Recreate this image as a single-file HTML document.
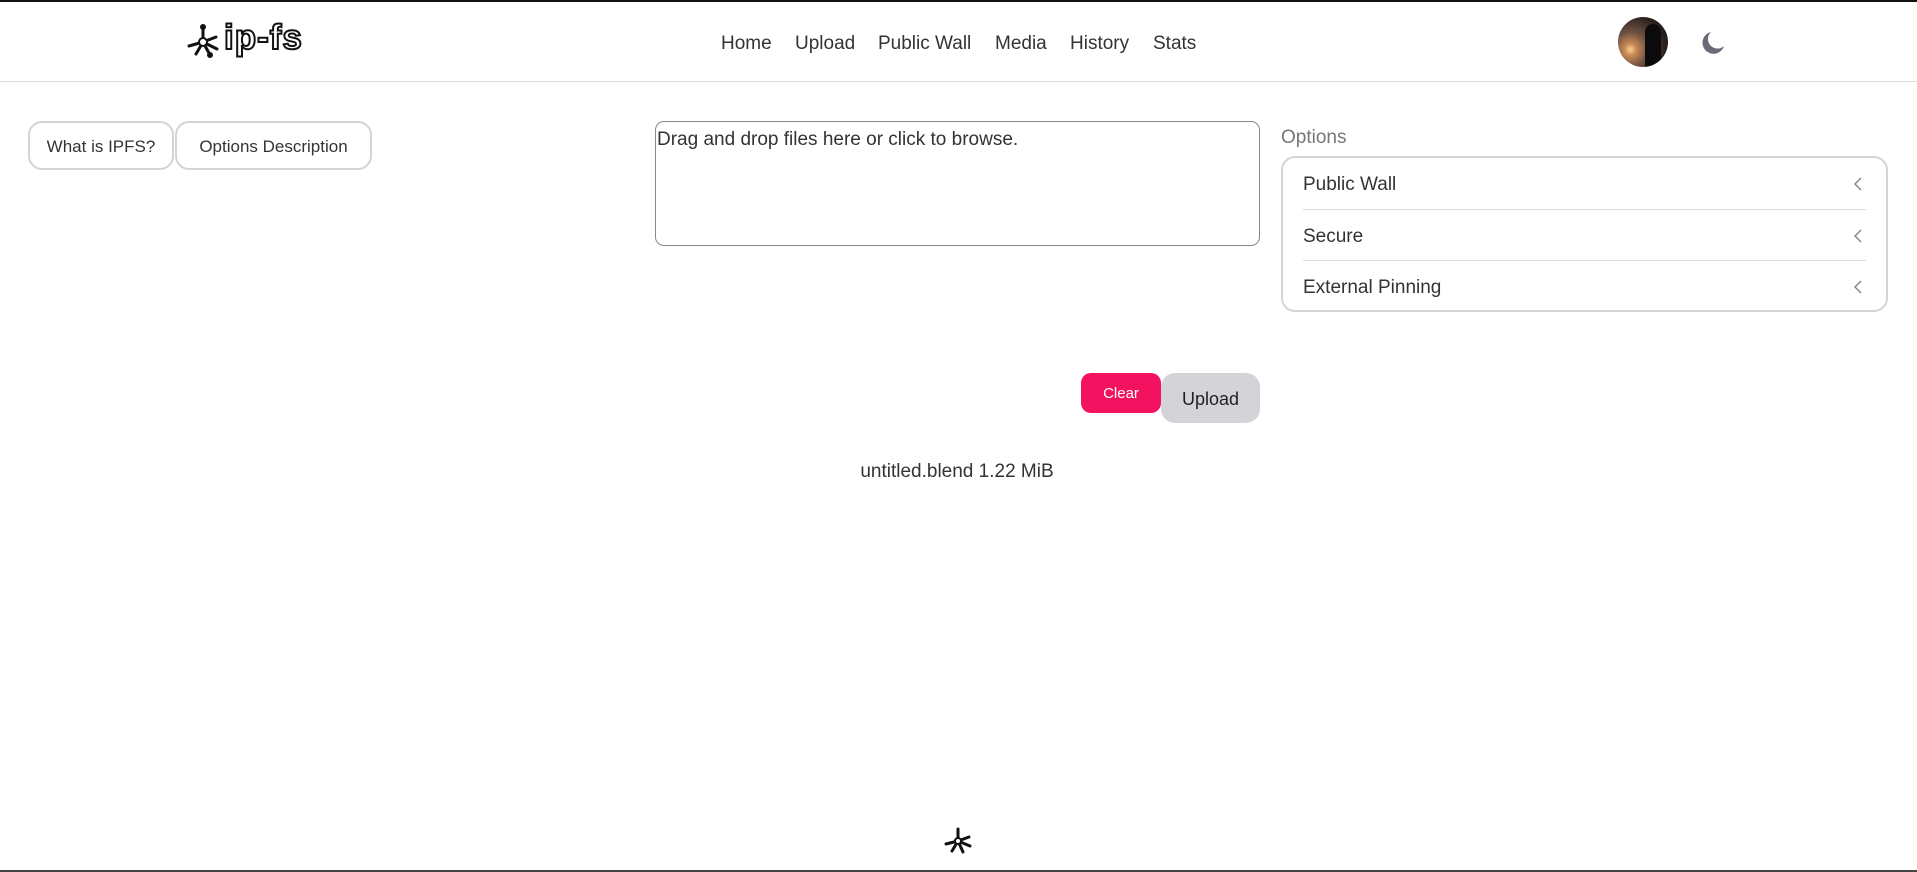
<!DOCTYPE html>
<html><head><meta charset="utf-8"><style>
*{box-sizing:border-box;margin:0;padding:0}
body{width:1917px;height:872px;background:#fff;font-family:"Liberation Sans",sans-serif;color:#333;position:relative;overflow:hidden}
.topbar{position:absolute;left:0;top:0;width:100%;height:2px;background:#111}
.hdr{position:absolute;left:0;top:2px;width:100%;height:80px;border-bottom:1px solid #ddd}
.nav{position:absolute;top:33px;font-size:19px;color:#333}
.btn{position:absolute;border:2px solid #d4d4d8;border-radius:14px;font-size:17px;display:flex;align-items:center;justify-content:center;color:#333;background:#fff;padding-top:2px}
.drop{position:absolute;left:655px;top:121px;width:605px;height:125px;border:1px solid #888;border-radius:9px;font-size:19px;padding:7px 0 0 1px;color:#333}
.opts{position:absolute;left:1281px;top:156px;width:607px;height:156px;border:2px solid #d4d4d8;border-radius:14px}
.row{position:absolute;left:20px;right:20px;height:51px;font-size:19px;line-height:53px;color:#333}
.row+.row{border-top:1px solid #ddd}
.row svg{position:absolute;right:2px;top:19px}
</style></head><body>
<div class="topbar"></div>
<div class="hdr"></div>
<svg style="position:absolute;left:186px;top:22px" width="34" height="38" viewBox="0 0 34 38"><g stroke="#111" stroke-width="3" stroke-linecap="round" fill="none"><line x1="17" y1="20" x2="17" y2="5"/><line x1="17" y1="20" x2="3" y2="24"/><line x1="17" y1="20" x2="30" y2="15"/><line x1="17" y1="20" x2="10" y2="32"/><line x1="17" y1="20" x2="24" y2="33"/><line x1="17" y1="20" x2="31" y2="27"/></g><circle cx="17" cy="20" r="4" fill="#fff" stroke="#111" stroke-width="2"/><circle cx="17" cy="5" r="3" fill="#111"/><circle cx="24" cy="33" r="3" fill="#111"/></svg>
<div style="position:absolute;left:224px;top:18px;font-size:35px;font-weight:bold;color:#fff;-webkit-text-stroke:2px #111;letter-spacing:1px">ip-fs</div>
<div class="nav" style="left:721px">Home</div>
<div class="nav" style="left:795px">Upload</div>
<div class="nav" style="left:878px">Public Wall</div>
<div class="nav" style="left:995px">Media</div>
<div class="nav" style="left:1070px">History</div>
<div class="nav" style="left:1153px">Stats</div>
<div style="position:absolute;left:1618px;top:17px;width:50px;height:50px;border-radius:50%;background:radial-gradient(circle at 25% 65%,#f7d28a 0,#c98a55 12%,#6e5142 35%,#2a211d 70%,#111 100%);overflow:hidden"><div style="position:absolute;left:27px;top:7px;width:16px;height:45px;background:#0b0b0b;border-radius:8px 8px 0 0"></div></div>
<svg style="position:absolute;left:1700px;top:30px" width="26" height="26" viewBox="0 0 26 26"><path d="M11 2 A11 11 0 1 0 24 16 A9 9 0 0 1 11 2 Z" fill="#6b6b78"/></svg>
<div class="btn" style="left:28px;top:121px;width:146px;height:49px">What is IPFS?</div>
<div class="btn" style="left:175px;top:121px;width:197px;height:49px">Options Description</div>
<div class="drop">Drag and drop files here or click to browse.</div>
<div style="position:absolute;left:1281px;top:127px;font-size:19px;color:#777">Options</div>
<div class="opts">
<div class="row" style="top:0">Public Wall<svg width="12" height="14" viewBox="0 0 12 14"><path d="M9 1 L3 7 L9 13" stroke="#888" stroke-width="1.5" fill="none"/></svg></div>
<div class="row" style="top:51px">Secure<svg width="12" height="14" viewBox="0 0 12 14"><path d="M9 1 L3 7 L9 13" stroke="#888" stroke-width="1.5" fill="none"/></svg></div>
<div class="row" style="top:102px">External Pinning<svg width="12" height="14" viewBox="0 0 12 14"><path d="M9 1 L3 7 L9 13" stroke="#888" stroke-width="1.5" fill="none"/></svg></div>
</div>
<div style="position:absolute;left:1081px;top:373px;width:80px;height:40px;border-radius:10px;background:#f31260;color:#fff;font-size:15px;display:flex;align-items:center;justify-content:center">Clear</div>
<div style="position:absolute;left:1161px;top:373px;width:99px;height:50px;border-radius:14px;background:#d4d4d8;color:#222;font-size:18px;display:flex;align-items:center;justify-content:center;padding-top:3px">Upload</div>
<div style="position:absolute;left:0;width:1914px;top:461px;text-align:center;font-size:19px;color:#333">untitled.blend 1.22 MiB</div>
<svg style="position:absolute;left:943px;top:826px" width="30" height="30" viewBox="0 0 30 30"><g stroke="#111" stroke-width="3" stroke-linecap="round"><line x1="15" y1="15" x2="15" y2="3"/><line x1="15" y1="15" x2="3" y2="18"/><line x1="15" y1="15" x2="26" y2="11"/><line x1="15" y1="15" x2="9" y2="25"/><line x1="15" y1="15" x2="20" y2="26"/><line x1="15" y1="15" x2="27" y2="20"/></g><circle cx="15" cy="15" r="3" fill="#fff" stroke="#111" stroke-width="2"/></svg>
<div style="position:absolute;left:0;bottom:0;width:100%;height:2px;background:#444"></div>
</body></html>
